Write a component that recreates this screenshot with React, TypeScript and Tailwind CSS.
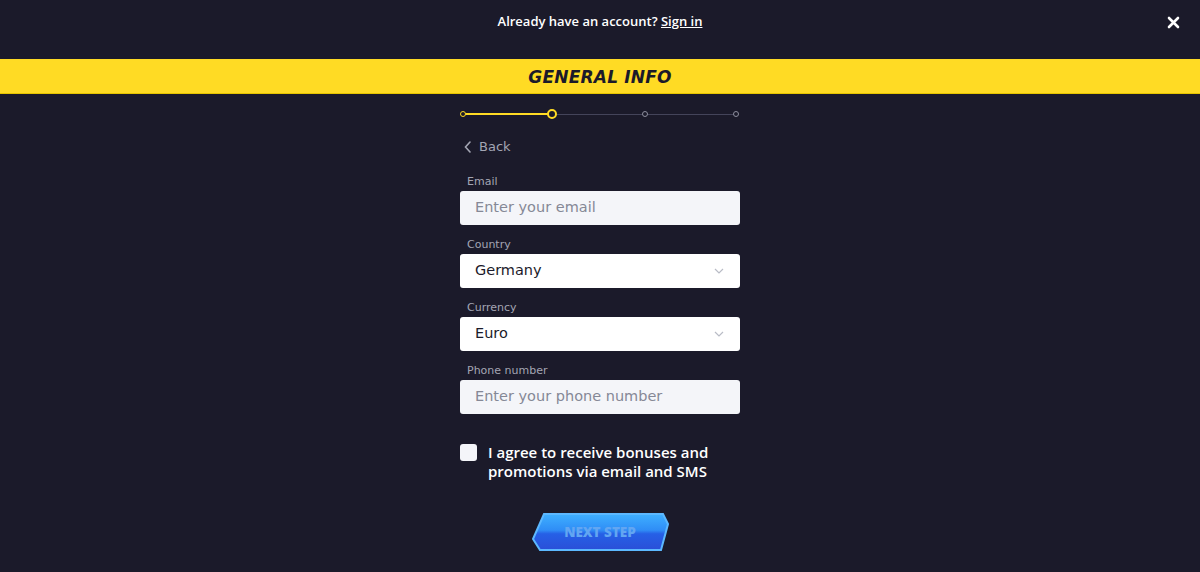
import React from 'react';

const font = { fontFamily: '"DejaVu Sans", "Liberation Sans", sans-serif' };
const boldFont = { fontFamily: '"Open Sans", "DejaVu Sans", sans-serif' };

const ChevronDown = () => (
  <svg width="12" height="12" viewBox="0 0 12 12" fill="none" stroke="#b9bcc6" strokeWidth="1.2">
    <path d="M2 4l4 4 4-4" />
  </svg>
);

const Field: React.FC<{ label: string; value?: string; placeholder?: string; select?: boolean }> = ({
  label,
  value,
  placeholder,
  select,
}) => (
  <div className="flex flex-col">
    <label className="text-[11px] text-[#a3a5b3] pl-[7px] leading-[14px] mb-[2px]">{label}</label>
    <div
      className={`h-[34px] rounded-[3px] flex items-center justify-between pl-[15px] pr-[15px] ${
        select ? 'bg-white' : 'bg-[#f4f5f9]'
      }`}
    >
      {value ? (
        <span className="text-[14.5px] text-[#1b1a2a]">{value}</span>
      ) : (
        <span className="text-[14.5px] text-[#858896]">{placeholder}</span>
      )}
      {select && <ChevronDown />}
    </div>
  </div>
);

export default function App() {
  return (
    <div className="w-[1200px] h-[572px] bg-[#1b1a2a] flex flex-col overflow-hidden" style={font}>
      <div className="h-[59px] relative flex items-center justify-center">
        <p className="text-white text-[13px] font-semibold -mt-[16px]" style={boldFont}>
          Already have an account? <span className="underline">Sign in</span>
        </p>
        <svg className="absolute right-[20px] top-[16px]" width="13" height="13" viewBox="0 0 13 13" stroke="white" strokeWidth="2.6" strokeLinecap="round">
          <path d="M2 2l9 9M11 2l-9 9" />
        </svg>
      </div>
      <div className="h-[35px] bg-[#ffdb24] flex items-center justify-center border-b border-[#e6c400]">
        <h1 className="text-[17px] font-bold italic text-[#1b1a2a] tracking-[0.2px] mt-[3px]">GENERAL INFO</h1>
      </div>

      <div className="w-[280px] mx-auto flex flex-col">
        {/* stepper */}
        <div className="relative h-[14px] mt-[13px] mx-[3px]">
          <div className="absolute left-0 top-[6px] w-[89px] h-[2px] bg-[#ffdb24]" />
          <div className="absolute left-[89px] right-0 top-[6.5px] h-[1px] bg-[#44445a]" />
          <div className="absolute left-[-3px] top-[4px] w-[6px] h-[6px] rounded-full border-[1.5px] border-[#ffdb24] bg-[#1b1a2a]" />
          <div className="absolute left-[84px] top-[2px] w-[10px] h-[10px] rounded-full border-[2.5px] border-[#ffdb24] bg-[#1b1a2a]" />
          <div className="absolute left-[179px] top-[4px] w-[6px] h-[6px] rounded-full border-[1.5px] border-[#8d8e9e] bg-[#1b1a2a]" />
          <div className="absolute left-[270px] top-[4px] w-[6px] h-[6px] rounded-full border-[1.5px] border-[#8d8e9e] bg-[#1b1a2a]" />
        </div>

        <div className="flex items-center gap-[7px] mt-[16px] pl-[4px] text-[#a3a5b3] text-[13px]">
          <svg width="8" height="12" viewBox="0 0 8 12" fill="none" stroke="#a3a5b3" strokeWidth="1.6" strokeLinecap="round">
            <path d="M6 1L1.5 6L6 11" />
          </svg>
          <span>Back</span>
        </div>

        <div className="flex flex-col gap-[13px] mt-[18px]">
          <Field label="Email" placeholder="Enter your email" />
          <Field label="Country" value="Germany" select />
          <Field label="Currency" value="Euro" select />
          <Field label="Phone number" placeholder="Enter your phone number" />
        </div>

        <div className="flex items-start gap-[11px] mt-[30px]">
          <div className="w-[17px] h-[17px] rounded-[3px] bg-[#f4f5f9] shrink-0" />
          <p className="text-white text-[15px] font-semibold leading-[19px] -mt-[1px]" style={boldFont}>
            I agree to receive bonuses and
            <br />
            promotions via email and SMS
          </p>
        </div>

        <div className="flex justify-center mt-[32px]">
          <div className="relative w-[137px] h-[38px] flex items-center justify-center">
            <svg className="absolute inset-0" width="137" height="38" viewBox="0 0 137 38">
              <defs>
                <linearGradient id="btn" x1="0" y1="0" x2="0" y2="1">
                  <stop offset="0" stopColor="#3fb0ff" />
                  <stop offset="0.45" stopColor="#2f8df6" />
                  <stop offset="0.55" stopColor="#2660e6" />
                  <stop offset="1" stopColor="#2a4fd8" />
                </linearGradient>
              </defs>
              <polygon points="12,1 131,1 136,11 129,37 8,37 1,26" fill="url(#btn)" stroke="#5cb8ff" strokeWidth="2" />
            </svg>
            <span className="relative text-[13.5px] font-extrabold text-[#62a6f2] mt-[2px]" style={boldFont}>NEXT STEP</span>
          </div>
        </div>
      </div>
    </div>
  );
}
